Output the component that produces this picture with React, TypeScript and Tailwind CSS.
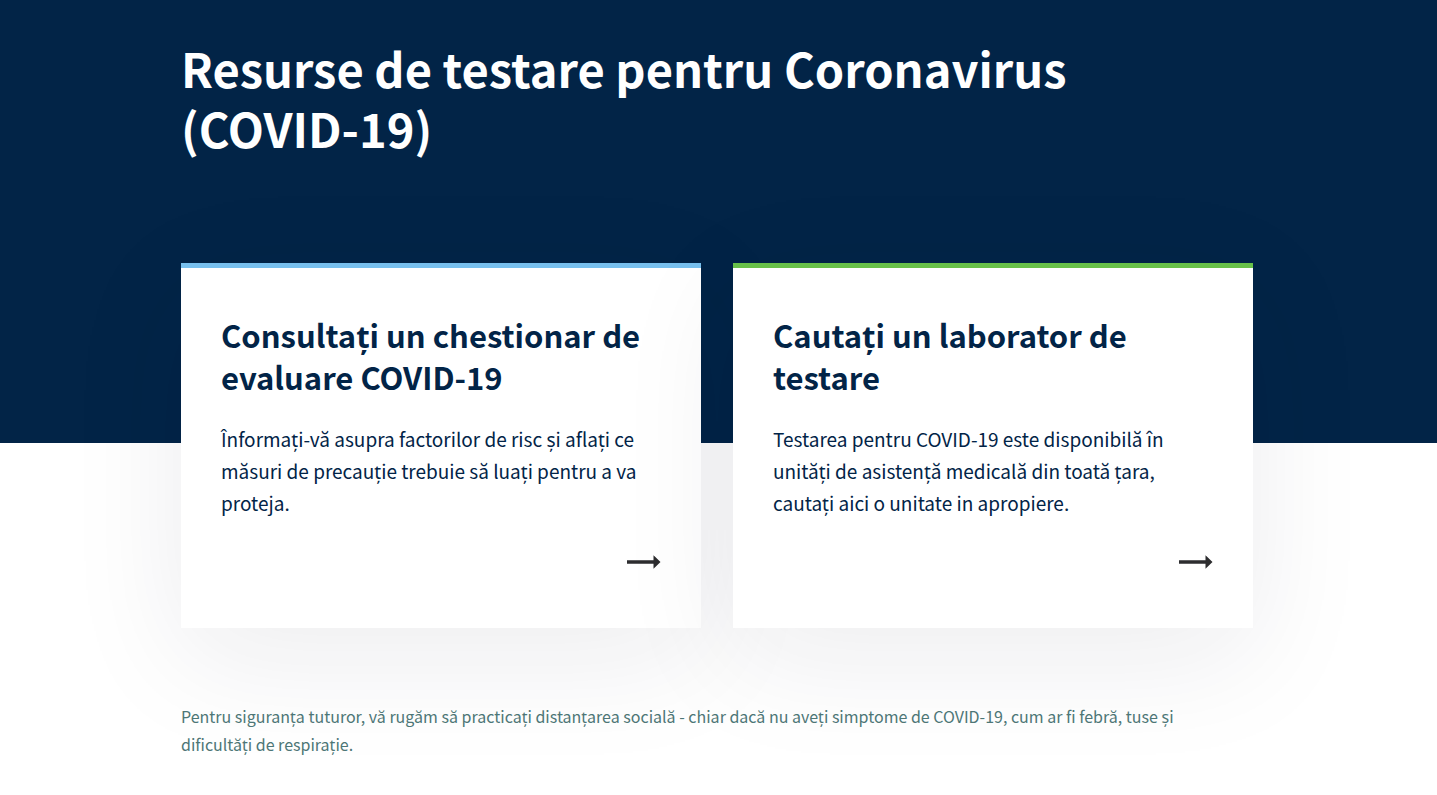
type Card = { title: string; body: string; accent: string };

const cards: Card[] = [
  {
    title: 'Consultați un chestionar de evaluare COVID-19',
    body: 'Înformați-vă asupra factorilor de risc și aflați ce măsuri de precauție trebuie să luați pentru a va proteja.',
    accent: 'border-[#78c0ee]',
  },
  {
    title: 'Cautați un laborator de testare',
    body: 'Testarea pentru COVID-19 este disponibilă în unități de asistență medicală din toată țara, cautați aici o unitate in apropiere.',
    accent: 'border-[#68c149]',
  },
];

function Arrow() {
  return (
    <svg className="ml-auto block" width="34" height="14" viewBox="0 0 34 14" fill="#2d2d2f" aria-hidden="true">
      <path d="M0 5.200h26.500V0.300L33.500 7L26.500 13.700V8.800H0Z" />
    </svg>
  );
}

function ResourceCard({ title, body, accent }: Card) {
  return (
    <a
      href="#"
      className={`block border-t-5 bg-white px-10 pt-[46px] pb-[59px] shadow-[0_30px_112px_rgba(20,20,50,0.08)] ${accent}`}
    >
      <h2 className="text-[31px] leading-[42px] font-bold">{title}</h2>
      <p className="mt-[25px] mb-9 text-[19px] leading-8">{body}</p>
      <Arrow />
    </a>
  );
}

export default function App() {
  return (
    <div className="min-h-screen bg-white font-['Noto_Sans_CJK_SC','Noto_Sans',sans-serif] text-[#022447]">
      <header className="bg-[#022447] pt-[38px] pr-[3px] pb-[285px] text-white">
        <div className="mx-auto max-w-[1072px]">
          <h1 className="max-w-[960px] text-[47px] leading-[60px] font-bold">
            Resurse de testare pentru Coronavirus (COVID-19)
          </h1>
        </div>
      </header>
      <main className="-mt-[180px] pr-[3px]">
        <div className="mx-auto max-w-[1072px]">
          <div className="grid grid-cols-2 gap-8">
            {cards.map((card) => (
              <ResourceCard key={card.title} {...card} />
            ))}
          </div>
          <p className="mt-[74px] max-w-[1040px] pb-9 text-[16px] leading-7 text-[#4d7676]">
            Pentru siguranța tuturor, vă rugăm să practicați distanțarea socială - chiar dacă nu aveți simptome de
            COVID-19, cum ar fi febră, tuse și dificultăți de respirație.
          </p>
        </div>
      </main>
    </div>
  );
}
